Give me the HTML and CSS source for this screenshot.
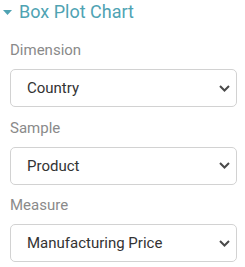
FILE: index.html
```html
<!DOCTYPE html>
<html lang="en">
<head>
  <meta charset="UTF-8" />
  <meta name="viewport" content="width=device-width, initial-scale=1" />
  <title>Box Plot Chart</title>
  <link rel="stylesheet" href="styles.css">
</head>
<body>

<div class="panel">
  <div class="panel-title">
    <svg class="caret" width="9" height="5" viewBox="0 0 9 5"><path d="M0 0 L9 0 L4.5 5 Z" /></svg>
    <span>Box Plot Chart</span>
  </div>

  <div class="field">
    <div class="field-label">Dimension</div>
    <div class="select">
      <span>Country</span>
      <svg class="chevron" width="11" height="7" viewBox="0 0 11 7"><path d="M1 1 L5.5 5.5 L10 1" /></svg>
    </div>
  </div>

  <div class="field">
    <div class="field-label">Sample</div>
    <div class="select">
      <span>Product</span>
      <svg class="chevron" width="11" height="7" viewBox="0 0 11 7"><path d="M1 1 L5.5 5.5 L10 1" /></svg>
    </div>
  </div>

  <div class="field">
    <div class="field-label">Measure</div>
    <div class="select">
      <span>Manufacturing Price</span>
      <svg class="chevron" width="11" height="7" viewBox="0 0 11 7"><path d="M1 1 L5.5 5.5 L10 1" /></svg>
    </div>
  </div>
</div>

</body>
</html>
```

FILE: styles.css
```css
body {
  margin: 0;
  background: #ffffff;
  font-family: Roboto, 'Liberation Sans', sans-serif;
}

.panel {
  padding: 1px 8px 0 10px;
}

.panel-title {
  display: flex;
  align-items: center;
  margin-left: -7px;
  height: 22px;
  font-size: 18px;
  line-height: 22px;
  color: #4fa3b3;
}

.caret {
  fill: #4fa3b3;
  margin-right: 7px;
}

.field {
  margin-top: 17px;
}

.field + .field {
  margin-top: 10.5px;
}

.field-label {
  font-size: 15px;
  line-height: 20px;
  color: #8a8a8a;
  margin-bottom: 9px;
}

.select {
  box-sizing: border-box;
  height: 38px;
  border: 1px solid #d2d2d2;
  border-radius: 5px;
  display: flex;
  align-items: center;
  justify-content: space-between;
  padding: 0 6px 0 16px;
  font-size: 15px;
  color: #333333;
}

.chevron {
  fill: none;
  stroke: #4a4a4a;
  stroke-width: 2;
}
```
